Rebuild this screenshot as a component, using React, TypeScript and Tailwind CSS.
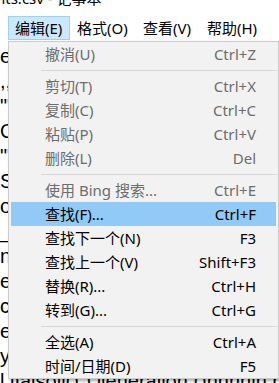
import React from 'react';

type Item = { label: string; shortcut: string; disabled?: boolean; active?: boolean } | 'sep';

const items: Item[] = [
  { label: '撤消(U)', shortcut: 'Ctrl+Z', disabled: true },
  'sep',
  { label: '剪切(T)', shortcut: 'Ctrl+X', disabled: true },
  { label: '复制(C)', shortcut: 'Ctrl+C', disabled: true },
  { label: '粘贴(P)', shortcut: 'Ctrl+V', disabled: true },
  { label: '删除(L)', shortcut: 'Del', disabled: true },
  'sep',
  { label: '使用 Bing 搜索...', shortcut: 'Ctrl+E', disabled: true },
  { label: '查找(F)...', shortcut: 'Ctrl+F', active: true },
  { label: '查找下一个(N)', shortcut: 'F3' },
  { label: '查找上一个(V)', shortcut: 'Shift+F3' },
  { label: '替换(R)...', shortcut: 'Ctrl+H' },
  { label: '转到(G)...', shortcut: 'Ctrl+G' },
  'sep',
  { label: '全选(A)', shortcut: 'Ctrl+A' },
  { label: '时间/日期(D)', shortcut: 'F5' },
];

const lines = [
  'e,',
  ',,',
  '"",',
  'O',
  '"",',
  'S',
  'o',
  '_',
  'ne',
  'er',
  'ca',
  'e',
  'y',
  'l lIaisoli() ) lleneralion ()nnnnin hhh',
];

const menus = [
  { label: '编辑(E)', w: 'w-[62px]', open: true },
  { label: '格式(O)', w: 'w-[66px]' },
  { label: '查看(V)', w: 'w-[64px]' },
  { label: '帮助(H)', w: 'w-[64px]' },
];

const ui = { fontFamily: '"Noto Sans", "Noto Sans CJK SC", sans-serif' };

export default function App() {
  return (
    <div className="relative w-[279px] h-[383px] overflow-hidden bg-white text-black" style={ui}>
      {/* title */}
      <div className="h-[15px] overflow-hidden">
        <div className="-mt-[12px] -ml-[4px] text-[15px] leading-[20px] whitespace-nowrap">nts.csv - 记事本</div>
      </div>

      {/* menu bar */}
      <div className="h-[26px] flex items-center pl-[8px] text-[15px]">
        {menus.map((m) => (
          <div
            key={m.label}
            className={`${m.w} h-[24px] flex items-center pl-[6px] border whitespace-nowrap ${
              m.open ? 'border-[#99d1ff] bg-[#cce8ff]' : 'border-transparent'
            }`}
          >
            {m.label}
          </div>
        ))}
      </div>

      {/* document text */}
      <div
        className="pt-[3px] text-[20px] leading-[25px] whitespace-nowrap"
        style={{ fontFamily: '"Liberation Sans", sans-serif' }}
      >
        {lines.map((l, i) => (
          <div key={i}>{l}</div>
        ))}
      </div>

      {/* dropdown */}
      <div className="absolute left-[8px] top-[41px] w-[271px] border border-[#cccccc] bg-[#f2f2f2] shadow-[2px_2px_3px_rgba(0,0,0,0.35)] text-[15px]">
        {items.map((it, i) =>
          it === 'sep' ? (
            <div key={i} className="h-[8px] pt-[4px] pl-[32px] pr-[1px]">
              <div className="h-px bg-[#d7d7d7]" />
            </div>
          ) : (
            <div
              key={i}
              className={`mx-[2px] h-[24px] flex items-center justify-between pl-[34px] pr-[20px] whitespace-nowrap ${
                it.active ? 'bg-[#91c9f7]' : ''
              } ${it.disabled ? 'text-[#6d6d6d]' : 'text-black'}`}
            >
              <span>{it.label}</span>
              <span>{it.shortcut}</span>
            </div>
          )
        )}
      </div>
    </div>
  );
}
